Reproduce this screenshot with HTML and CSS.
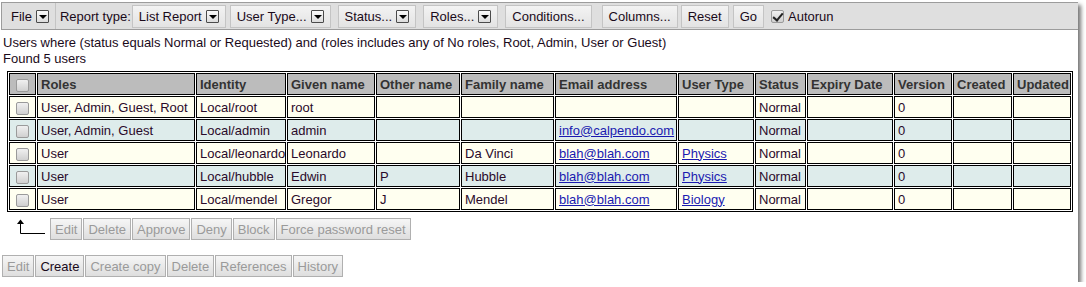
FILE: index.html
```html
<!DOCTYPE html>
<html lang="en">
<head>
  <meta charset="UTF-8"/>
  <title>Users</title>
  <link rel="stylesheet" href="styles.css">
</head>
<body>
<div class="window">
  <!-- top toolbar -->
  <div class="toolbar">
    <span class="tb tb-file">File <span class="drop"></span></span>
    <span class="tb-label">Report type:</span>
    <span class="tb">List Report <span class="drop"></span></span>
    <span class="tb tb-near">User Type... <span class="drop"></span></span>
    <span class="tb">Status... <span class="drop"></span></span>
    <span class="tb">Roles... <span class="drop"></span></span>
    <span class="tb">Conditions...</span>
    <span class="tb tb-wide">Columns...</span>
    <span class="tb tb-tight">Reset</span>
    <span class="tb tb-near">Go</span>
    <label class="autorun"><span class="check on"></span>Autorun</label>
  </div>

  <div class="summary">
    <div>Users where (status equals Normal or Requested) and (roles includes any of No roles, Root, Admin, User or Guest)</div>
    <div>Found 5 users</div>
  </div>

  <table class="grid">
    <colgroup>
      <col style="width:27px"><col style="width:158px"><col style="width:90px"><col style="width:88px">
      <col style="width:84px"><col style="width:93px"><col style="width:122px"><col style="width:76px">
      <col style="width:51px"><col style="width:86px"><col style="width:58px"><col style="width:59px">
      <col style="width:58px">
    </colgroup>
    <thead>
      <tr>
        <th class="sel"><span class="check"></span></th>
        <th>Roles</th><th>Identity</th><th>Given name</th><th>Other name</th><th>Family name</th>
        <th>Email address</th><th>User Type</th><th>Status</th><th>Expiry Date</th><th>Version</th>
        <th>Created</th><th>Updated</th>
      </tr>
    </thead>
    <tbody>
      <tr>
        <td class="sel"><span class="check"></span></td>
        <td>User, Admin, Guest, Root</td><td>Local/root</td><td>root</td><td></td><td></td>
        <td></td><td></td><td>Normal</td><td></td><td>0</td><td></td><td></td>
      </tr>
      <tr>
        <td class="sel"><span class="check"></span></td>
        <td>User, Admin, Guest</td><td>Local/admin</td><td>admin</td><td></td><td></td>
        <td><a href="#">info@calpendo.com</a></td><td></td><td>Normal</td><td></td><td>0</td><td></td><td></td>
      </tr>
      <tr>
        <td class="sel"><span class="check"></span></td>
        <td>User</td><td>Local/leonardo</td><td>Leonardo</td><td></td><td>Da Vinci</td>
        <td><a href="#">blah@blah.com</a></td><td><a href="#">Physics</a></td><td>Normal</td><td></td><td>0</td><td></td><td></td>
      </tr>
      <tr>
        <td class="sel"><span class="check"></span></td>
        <td>User</td><td>Local/hubble</td><td>Edwin</td><td>P</td><td>Hubble</td>
        <td><a href="#">blah@blah.com</a></td><td><a href="#">Physics</a></td><td>Normal</td><td></td><td>0</td><td></td><td></td>
      </tr>
      <tr>
        <td class="sel"><span class="check"></span></td>
        <td>User</td><td>Local/mendel</td><td>Gregor</td><td>J</td><td>Mendel</td>
        <td><a href="#">blah@blah.com</a></td><td><a href="#">Biology</a></td><td>Normal</td><td></td><td>0</td><td></td><td></td>
      </tr>
    </tbody>
  </table>

  <!-- actions for selected rows -->
  <div class="row-actions">
    <svg class="arrow" width="30" height="18" viewBox="0 0 30 18">
      <path d="M4.5 4 V14.5 H29" fill="none" stroke="#000" stroke-width="1"/>
      <path d="M1 5 L4.5 0.5 L8 5 Z" fill="#000"/>
    </svg>
    <div class="btns">
      <span class="btn off">Edit</span>
      <span class="btn off">Delete</span>
      <span class="btn off">Approve</span>
      <span class="btn off">Deny</span>
      <span class="btn off">Block</span>
      <span class="btn off">Force password reset</span>
    </div>
  </div>

  <div class="btns bottom">
    <span class="btn off">Edit</span>
    <span class="btn">Create</span>
    <span class="btn off">Create copy</span>
    <span class="btn off">Delete</span>
    <span class="btn off">References</span>
    <span class="btn off">History</span>
  </div>
</div>
</body>
</html>
```

FILE: styles.css
```css
* { box-sizing: border-box; }
body { margin: 0; background: #fff; font-family: "Liberation Sans", Arial, sans-serif; font-size: 13px; color: #1a0a1a; }
.window { width: 1078px; height: 282px; background: #fff; box-shadow: 4px 4px 4px -1px #777; padding-top: 2px; }

.toolbar { display: flex; align-items: center; gap: 7px; height: 28px; margin-left: 1px; background: #dfdfdf; border: 1px solid #9c9c9c; border-right: none; padding-right: 4px; }
.tb { display: flex; align-items: center; gap: 4px; height: 23px; padding: 0 6px; border: 1px solid #c4c4c4; background: linear-gradient(#f3f3f3, #e3e3e3); color: #1a0a1a; white-space: nowrap; }
.tb-near { margin-left: -3px; }
.tb-wide { margin-left: 3px; }
.tb-tight { margin-left: -4px; }
.tb-file { border-top: none; border-left: none; border-bottom: none; background: none; height: 26px; padding-left: 9px; margin-right: -3px; }
.tb-label { margin-right: -6px; }
.drop { width: 13px; height: 13px; border: 1px solid #4a4a4a; border-radius: 1px; background: linear-gradient(#fafafa, #dcdcdc); position: relative; }
.drop::after { content: ""; position: absolute; left: 2px; top: 4px; border-left: 4px solid transparent; border-right: 4px solid transparent; border-top: 4px solid #000; }
.autorun { display: flex; align-items: center; gap: 4px; margin-left: 0; }

.check { display: inline-block; width: 13px; height: 13px; border: 1px solid #9a9a9a; border-radius: 2px; background: linear-gradient(#f0f0f0, #d0d0d0); vertical-align: middle; position: relative; }
.check.on::after { content: ""; position: absolute; left: 3px; top: 0px; width: 4px; height: 8px; border-right: 2px solid #222; border-bottom: 2px solid #222; transform: rotate(40deg); }

.summary { margin: 5px 0 0 3px; line-height: 16px; }

.grid { table-layout: fixed; width: 1066px; margin: 4px 0 0 7px; border: 1px solid #000; border-spacing: 1px; }
.grid th, .grid td { border: 1px solid #000; padding: 0 3px; height: 22px; text-align: left; white-space: nowrap; overflow: hidden; }
.grid th { background: #bcbcbc; color: #333; font-weight: bold; }
.grid td { color: #2a0a2a; }
.grid tbody tr:nth-child(odd) td { background: #fffff0; }
.grid tbody tr:nth-child(even) td { background: #deeceb; }
.grid .sel { text-align: center; padding: 0; }
.grid a { color: #1a1ab0; }

.row-actions { display: flex; align-items: flex-end; margin: 6px 0 0 16px; height: 22px; }
.arrow { margin-right: 4px; margin-bottom: 3px; }
.btns { display: flex; gap: 1px; }
.btn { display: inline-flex; align-items: center; height: 22px; padding: 0 4px; border: 1px solid #b0b0b0; background: linear-gradient(#f6f6f6, #dedede); color: #1a0a1a; }
.btn.off { color: #9a9a9a; }
.bottom { margin: 15px 0 0 2px; }
```
